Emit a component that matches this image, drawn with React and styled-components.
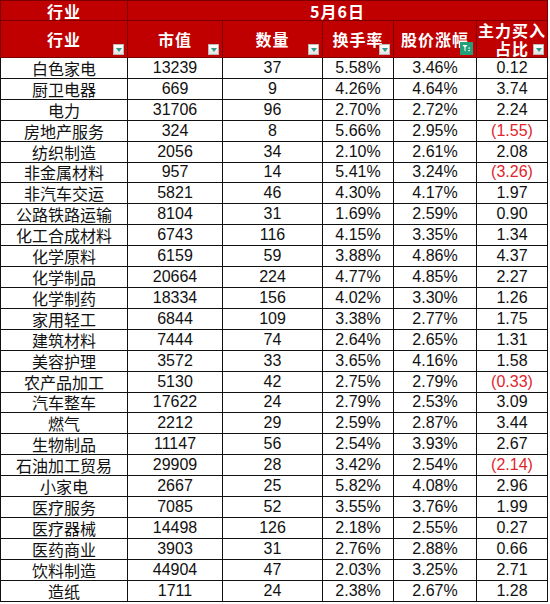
import styled, { createGlobalStyle } from "styled-components";

const GlobalStyle = createGlobalStyle`
  html, body {
    margin: 0;
    padding: 0;
    background: #fff;
  }
  body {
    font-family: "Liberation Sans", "Noto Sans CJK SC", sans-serif;
  }
`

const Wrap = styled.div`
  width: 550px;
  height: 604px;
  overflow: hidden;
  background: #fff;
`

const Table = styled.table`
  border-collapse: collapse;
  table-layout: fixed;
  width: 547px;
`

const HeadCell = styled.th`
  position: relative;
  background: #c00000;
  color: #fff;
  font-family: "Noto Sans CJK SC", sans-serif;
  font-weight: 700;
  font-size: 16px;
  line-height: 18px;
  text-align: center;
  padding: 0;
  border: 1px solid #7a0000;
  letter-spacing: 1px;
`

const TopRow = styled.tr`
  height: 20px;
`

const SubRow = styled.tr`
  height: 37px;
`

const Row = styled.tr`
  height: 20.92px;
`

const Cell = styled.td`
  padding: 0;
  border: 1px solid #111;
  text-align: center;
  font-size: 16px;
  line-height: 18px;
  color: ${p => (p.$neg ? "#e2242c" : "#111")};
  font-family: ${p =>
    p.$cn ? `"Noto Sans CJK SC", sans-serif` : `"Liberation Sans", sans-serif`};
  white-space: nowrap;
`

const Filter = styled.span`
  position: absolute;
  right: 3px;
  bottom: 2px;
  width: 11px;
  height: 11px;
  box-sizing: border-box;
  border: 1px solid #b9b9b9;
  background: linear-gradient(#ffffff, #e4e4e4);
  display: flex;
  align-items: center;
  justify-content: center;

  &::after {
    content: "";
    border-left: 3px solid transparent;
    border-right: 3px solid transparent;
    border-top: 4px solid #2f9a85;
    margin-top: 1px;
  }
`

const ActiveFilter = styled.span`
  position: absolute;
  right: 3px;
  bottom: 2px;
  width: 13px;
  height: 13px;
  background: #21a07a;
  display: flex;
  align-items: center;
  justify-content: center;
`

const rows = [
  ["白色家电", 13239, 37, "5.58%", "3.46%", "0.12"],
  ["厨卫电器", 669, 9, "4.26%", "4.64%", "3.74"],
  ["电力", 31706, 96, "2.70%", "2.72%", "2.24"],
  ["房地产服务", 324, 8, "5.66%", "2.95%", "(1.55)"],
  ["纺织制造", 2056, 34, "2.10%", "2.61%", "2.08"],
  ["非金属材料", 957, 14, "5.41%", "3.24%", "(3.26)"],
  ["非汽车交运", 5821, 46, "4.30%", "4.17%", "1.97"],
  ["公路铁路运输", 8104, 31, "1.69%", "2.59%", "0.90"],
  ["化工合成材料", 6743, 116, "4.15%", "3.35%", "1.34"],
  ["化学原料", 6159, 59, "3.88%", "4.86%", "4.37"],
  ["化学制品", 20664, 224, "4.77%", "4.85%", "2.27"],
  ["化学制药", 18334, 156, "4.02%", "3.30%", "1.26"],
  ["家用轻工", 6844, 109, "3.38%", "2.77%", "1.75"],
  ["建筑材料", 7444, 74, "2.64%", "2.65%", "1.31"],
  ["美容护理", 3572, 33, "3.65%", "4.16%", "1.58"],
  ["农产品加工", 5130, 42, "2.75%", "2.79%", "(0.33)"],
  ["汽车整车", 17622, 24, "2.79%", "2.53%", "3.09"],
  ["燃气", 2212, 29, "2.59%", "2.87%", "3.44"],
  ["生物制品", 11147, 56, "2.54%", "3.93%", "2.67"],
  ["石油加工贸易", 29909, 28, "3.42%", "2.54%", "(2.14)"],
  ["小家电", 2667, 25, "5.82%", "4.08%", "2.96"],
  ["医疗服务", 7085, 52, "3.55%", "3.76%", "1.99"],
  ["医疗器械", 14498, 126, "2.18%", "2.55%", "0.27"],
  ["医药商业", 3903, 31, "2.76%", "2.88%", "0.66"],
  ["饮料制造", 44904, 47, "2.03%", "3.25%", "2.71"],
  ["造纸", 1711, 24, "2.38%", "2.67%", "1.28"],
]

const widths = [127, 95, 100, 71, 83, 71]

const FunnelIcon = () => (
  <svg width="9" height="9" viewBox="0 0 9 9">
    <path d="M0.5 1h5l-2 2.5v4l-1-0.8v-3.2z" fill="#fff" />
    <rect x="6.3" y="3.5" width="1.6" height="1.2" fill="#fff" />
    <rect x="6.3" y="6" width="1.6" height="1.2" fill="#fff" />
  </svg>
)

export default function App() {
  return (
    <Wrap>
      <GlobalStyle />
      <Table>
        <colgroup>
          {widths.map((w, i) => (
            <col key={i} style={{ width: w }} />
          ))}
        </colgroup>
        <thead>
          <TopRow>
            <HeadCell>行业</HeadCell>
            <HeadCell colSpan={5}>5月6日</HeadCell>
          </TopRow>
          <SubRow>
            <HeadCell>行业<Filter /></HeadCell>
            <HeadCell>市值<Filter /></HeadCell>
            <HeadCell>数量<Filter /></HeadCell>
            <HeadCell>换手率<Filter /></HeadCell>
            <HeadCell>
              股价涨幅
              <ActiveFilter>
                <FunnelIcon />
              </ActiveFilter>
            </HeadCell>
            <HeadCell>
              主力买入
              <br />
              占比
              <Filter />
            </HeadCell>
          </SubRow>
        </thead>
        <tbody>
          {rows.map(r => (
            <Row key={r[0]}>
              <Cell $cn>{r[0]}</Cell>
              <Cell>{r[1]}</Cell>
              <Cell>{r[2]}</Cell>
              <Cell>{r[3]}</Cell>
              <Cell>{r[4]}</Cell>
              <Cell $neg={r[5].startsWith("(")}>{r[5]}</Cell>
            </Row>
          ))}
        </tbody>
      </Table>
    </Wrap>
  )
}
